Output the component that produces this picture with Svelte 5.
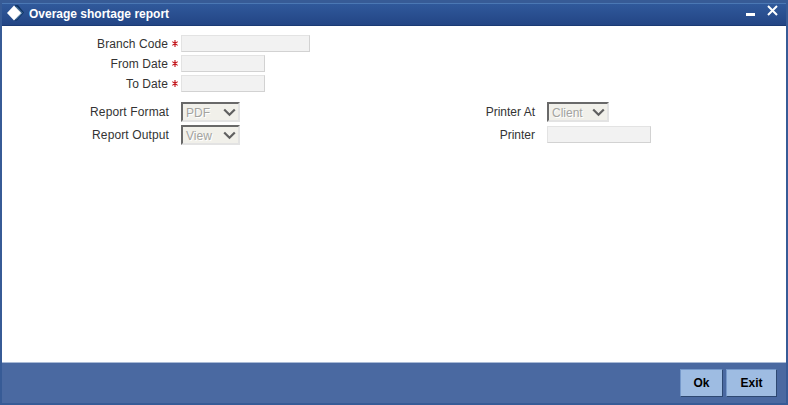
<script>
	const requiredFields = [
		{ id: 'branch', label: 'Branch Code', size: 'wide' },
		{ id: 'from', label: 'From Date', size: 'date' },
		{ id: 'to', label: 'To Date', size: 'date' }
	];

	const reportOptions = [
		{ label: 'Report Format', value: 'PDF' },
		{ label: 'Report Output', value: 'View' }
	];
</script>

{#snippet dropdown(value)}
	<div class="select">
		<span>{value}</span>
		<svg width="13" height="9" viewBox="0 0 13 9">
			<path d="M1.2 1.5 L6.5 6.8 L11.8 1.5" />
		</svg>
	</div>
{/snippet}

<main>
	<header>
		<svg class="logo" width="18" height="17" viewBox="0 0 18 17">
			<path d="M8 0 L11 0 L17 7.5 L10 15.5 L7 15.5 Z" fill="#103565" />
			<path d="M9 1.5 L15.2 7.8 L9 14.5" fill="none" stroke="#6d9dc6" stroke-width="0.8" />
			<path d="M7 0.5 L14.3 8 L7 15.5 L0 8 Z" fill="#fff" />
		</svg>
		<h1>Overage shortage report</h1>
		<div class="controls">
			<svg width="32" height="13" viewBox="0 0 32 13">
				<rect x="0" y="8" width="9" height="3" />
				<path d="M22 1 L31 10 M31 1 L22 10" />
			</svg>
		</div>
	</header>

	<section>
		<div class="required">
			{#each requiredFields as field}
				<div class="row">
					<label for={field.id}>{field.label}</label>
					<span class="star">
						<svg width="6" height="7" viewBox="0 0 6 7"><path d="M3 0V7M.3 1.6L5.7 5.4M5.7 1.6L.3 5.4" /></svg>
					</span>
					<input id={field.id} class={field.size} disabled />
				</div>
			{/each}
		</div>

		<div class="options">
			<div class="column report">
				{#each reportOptions as option}
					<div class="row">
						<span class="label">{option.label}</span>
						{@render dropdown(option.value)}
					</div>
				{/each}
			</div>
			<div class="column printer">
				<div class="row">
					<span class="label">Printer At</span>
					{@render dropdown('Client')}
				</div>
				<div class="row">
					<label class="label" for="printer">Printer</label>
					<input id="printer" disabled />
				</div>
			</div>
		</div>
	</section>

	<footer>
		<button class="ok">Ok</button>
		<button class="exit">Exit</button>
	</footer>
</main>

<style>
	:global(body) {
		overflow: hidden;
	}

	main {
		width: 788px;
		height: 405px;
		box-sizing: border-box;
		border: 2px solid #375b96;
		border-top-width: 3px;
		display: flex;
		flex-direction: column;
		background: #fff;
		color: #333;
		font: 12px/16px "Liberation Sans", Arial, sans-serif;
	}

	header {
		height: 23px;
		box-sizing: border-box;
		display: flex;
		align-items: flex-start;
		padding-left: 5px;
		border-top: 1px solid #4b78b4;
		border-bottom: 1px solid #1a3a74;
		background: linear-gradient(#30599b, #234585);
		color: #fff;
	}

	.logo {
		margin-top: 1px;
	}

	h1 {
		margin: 2px 0 0 4px;
		font-size: 12px;
		line-height: 16px;
	}

	.controls {
		margin: 1px 8px 0 auto;
	}

	.controls svg {
		display: block;
		fill: #fff;
	}

	.controls path {
		stroke: #fff;
		stroke-width: 2;
	}

	section {
		flex: 1;
		padding-top: 9px;
	}

	.required .row {
		height: 17px;
		margin-bottom: 3px;
	}

	.row {
		display: flex;
		align-items: center;
	}

	.required label {
		width: 166px;
		text-align: right;
		letter-spacing: 0.08px;
	}

	.star {
		width: 13px;
		display: flex;
		justify-content: center;
	}

	.star svg {
		stroke: #c4161c;
		stroke-width: 1.1;
	}

	input {
		width: 84px;
		height: 17px;
		box-sizing: border-box;
		margin: 0;
		padding: 0;
		border: 1px solid #e3e3e3;
		border-right-color: #d2d2d2;
		border-bottom-color: #d2d2d2;
		background: #f2f2f2;
	}

	input.wide {
		width: 129px;
	}

	.options {
		display: flex;
		margin-top: 10px;
	}

	.column {
		width: 366px;
	}

	.column .row {
		height: 20px;
		margin-bottom: 3px;
		align-items: flex-start;
	}

	.label {
		width: 167px;
		margin: 2px 12px 0 0;
		text-align: right;
	}

	.report .label {
		letter-spacing: 0.12px;
	}

	.printer input {
		width: 104px;
		margin-top: 1px;
	}

	.select {
		width: 59px;
		height: 20px;
		box-sizing: border-box;
		display: flex;
		justify-content: space-between;
		padding: 1px 2px 0 3px;
		border: 2px solid #696969;
		border-right-color: #e3e3e3;
		border-bottom-color: #e3e3e3;
		background: #f1f0ea;
		color: #a3a3a0;
		text-shadow: 1px 1px #fff;
	}

	.printer .select {
		width: 62px;
	}

	.select svg {
		margin-top: 3px;
		fill: none;
		stroke: #606060;
		stroke-width: 2.2;
	}

	footer {
		height: 41px;
		box-sizing: border-box;
		display: flex;
		justify-content: flex-end;
		gap: 3px;
		padding: 6px 9px 0 0;
		border-top: 1px solid #a9bad6;
		background: #4a69a1;
	}

	button {
		height: 28px;
		padding: 0;
		border: 1px solid #7598ca;
		border-right-color: #2d4872;
		border-bottom-color: #2d4872;
		background: #9ebce2;
		color: #000;
		font: bold 12px/16px "Liberation Sans", Arial, sans-serif;
	}

	.ok {
		width: 43px;
	}

	.exit {
		width: 51px;
	}
</style>
